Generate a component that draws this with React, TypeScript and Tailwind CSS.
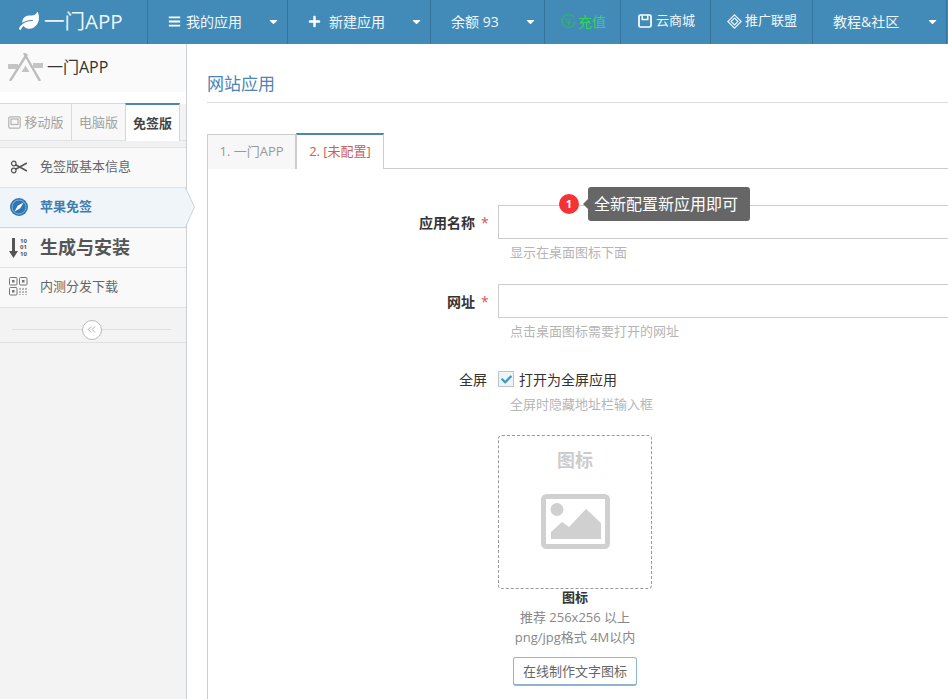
import React from "react";
import { FaLeaf, FaBars, FaPlus, FaCaretDown, FaCheck } from "react-icons/fa";
import { ChevronsLeft } from "lucide-react";

const font = "font-['Open_Sans','Noto_Sans_CJK_SC',sans-serif]";

function Nav({ w, children, caret, className = "" }: { w: string; children: React.ReactNode; caret?: boolean; className?: string }) {
  return (
    <div className={`${w} h-full shrink-0 flex items-center pb-[2px] border-r border-[#33739c] relative ${className}`}>
      {children}
      {caret && <FaCaretDown className="absolute right-[7px] top-[15px] text-[13px] text-white" />}
    </div>
  );
}

function AppStore() {
  return (
    <svg width="35" height="28" viewBox="0 0 35 28" className="shrink-0">
      <g fill="none" stroke="#bdbdbd" strokeWidth="2.4">
        <path d="M16 0 L32 28" />
        <path d="M19 1 L2 28" />
      </g>
      <rect x="0" y="11" width="10" height="5" fill="#c4c4c4" />
      <rect x="25" y="10" width="10" height="5" fill="#c4c4c4" />
      <path d="M13.5 19 L17.5 12.5 L21.5 19 Z" fill="#c4c4c4" />
    </svg>
  );
}

function SideItem({ icon, children, className = "", bold }: { icon: React.ReactNode; children: React.ReactNode; className?: string; bold?: boolean }) {
  return (
    <div className={`h-10 flex items-center border-b border-[#dfe3e6] bg-[#f9f9f9] ${bold ? "" : "pb-[2px]"} ${className}`}>
      <div className="w-[40px] pl-[9px] shrink-0 flex items-center">{icon}</div>
      <div className={bold ? "text-[18px] font-bold text-[#555]" : "text-[13px] text-[#666]"}>{children}</div>
    </div>
  );
}

function FormRow({ label, hint, marginTop }: { label: string; hint: string; marginTop: string }) {
  return (
    <div className={`flex ${marginTop}`}>
      <div className="w-[281px] shrink-0 h-[34px] flex items-center justify-end text-[14px] font-bold text-[#333]">
        {label}
        <span className="text-[#d9534f] font-normal ml-[6px] w-[8px]">*</span>
      </div>
      <div className="ml-[9px] w-[520px] shrink-0">
        <div className="h-[34px] border border-[#ccc] bg-white" />
        <div className="text-[13px] text-[#b5b5b5] pl-[12px] mt-[3px] leading-[20px]">{hint}</div>
      </div>
    </div>
  );
}

function ImagePlaceholder() {
  return (
    <svg width="69" height="55" viewBox="0 0 69 55" className="mt-[21px]">
      <rect x="2.5" y="2.5" width="64" height="50" rx="3" fill="none" stroke="#d0d0d0" strokeWidth="5" />
      <circle cx="16" cy="15.5" r="6.5" fill="#d0d0d0" />
      <path d="M10 45 V38 L21 28 L28 33 L45 15 L60 29 V45 Z" fill="#d0d0d0" />
    </svg>
  );
}

export default function App() {
  return (
    <div className={`w-[948px] h-[699px] overflow-hidden bg-white flex flex-col ${font}`}>
      <header className="h-11 shrink-0 bg-[#428bb9] flex">
        <Nav w="w-[148px]" className="pl-[19px] gap-[5px] text-[20.5px] text-[#eef5f9]">
          <FaLeaf className="text-[20px] text-white" />
          <span>一门APP</span>
        </Nav>
        <Nav w="w-[140px]" caret className="pl-[20px] gap-[5px] text-[14px] text-[#f2f7fa]">
          <FaBars className="text-[13px] text-white" />
          <span>我的应用</span>
        </Nav>
        <Nav w="w-[143px]" caret className="pl-[20px] gap-[8px] text-[14px] text-[#f2f7fa]">
          <FaPlus className="text-[13px] text-white" />
          <span>新建应用</span>
        </Nav>
        <Nav w="w-[114px]" caret className="pl-[20px] text-[14px] text-[#f2f7fa]">
          <span>余额 93</span>
        </Nav>
        <Nav w="w-[76px]" className="pl-[16px] gap-[2px] text-[14px] text-[#2fd65a]">
          <svg width="15" height="15" viewBox="0 0 15 15" fill="none" stroke="#2fb56a" strokeWidth="1.1">
            <path d="M13 3.5 A6.5 6.5 0 1 0 14 7.5" />
            <path d="M5 4.5 L7.5 7.5 L10 4.5 M7.5 7.5 V11.5 M5.5 8.5 H9.5" />
          </svg>
          <span>充值</span>
        </Nav>
        <Nav w="w-[90px]" className="pl-[17px] gap-[4px] text-[13px] text-[#f2f7fa]">
          <svg width="14" height="14" viewBox="0 0 14 14" fill="none" stroke="#fff" strokeWidth="1.7">
            <rect x="1" y="1" width="12" height="12" rx="1.5" />
            <path d="M4.2 1.5 V5.5 H9.8 V1.5" strokeWidth="1.4" />
          </svg>
          <span>云商城</span>
        </Nav>
        <Nav w="w-[102px]" className="pl-[16px] gap-[3px] text-[13px] text-[#f2f7fa]">
          <svg width="15" height="15" viewBox="0 0 15 15" fill="none" stroke="#f2f7fa" strokeWidth="1.1">
            <path d="M7.5 0.8 L14.2 7.5 L7.5 14.2 L0.8 7.5 Z" />
            <path d="M7.5 4 L11 7.5 L7.5 11 L4 7.5 Z" />
          </svg>
          <span>推广联盟</span>
        </Nav>
        <Nav w="w-[134px]" caret className="pl-[20px] text-[14px] text-[#f2f7fa]">
          <span>教程&amp;社区</span>
        </Nav>
      </header>

      <div className="flex-1 flex min-h-0">
        <aside className="w-[187px] shrink-0 bg-[#f3f3f3] border-r border-[#ccd1d6] flex flex-col relative">
          <div className="h-[48px] bg-[#fafafa] flex items-center pl-[8px] gap-[4px] pb-[3px] text-[16px] text-[#333]">
            <AppStore />
            <span>一门APP</span>
          </div>
          <div className="h-[12px] bg-white" />
          <div className="h-[37px] flex items-end border-b border-[#dfe3e6] text-[13px] pr-[6px]">
            <div className="w-[72px] h-[37px] pt-[1px] pl-[1px] flex items-center justify-center gap-[3px] border-t border-r border-[#d9d9d9] bg-[#f8f8f8] text-[#a3a3a3]">
              <svg width="13" height="13" viewBox="0 0 13 13" fill="none" stroke="#b3b3b3" strokeWidth="1.2">
                <rect x="0.8" y="0.8" width="11.4" height="11.4" rx="1.5" />
                <rect x="3" y="3" width="7" height="5.5" />
              </svg>
              <span>移动版</span>
            </div>
            <div className="w-[53px] h-[37px] pt-[1px] flex items-center justify-center border-t border-[#d9d9d9] bg-[#f8f8f8] text-[#a3a3a3]">电脑版</div>
            <div className="w-[55px] h-[38px] -mb-px pt-[1px] flex items-center justify-center border-x border-[#d5d5d5] border-t-2 border-t-[#4a86ad] bg-white text-[#444] font-bold">免签版</div>
          </div>
          <div className="h-[7px] bg-[#f1f1f1] border-b border-[#e3e3e3]" />
          <SideItem icon={
            <svg width="18" height="14" viewBox="0 0 20 16" fill="none" stroke="#555" strokeWidth="1.4" className="ml-[1px]">
              <circle cx="4" cy="4" r="2.6" />
              <circle cx="4" cy="12" r="2.6" />
              <path d="M6.2 5.5 L19 12.5 M6.2 10.5 L19 3.5" strokeWidth="1.8" />
            </svg>
          }>免签版基本信息</SideItem>
          <div className="h-10 flex items-center border-b border-[#ccd3d9] bg-[#f0f5f9] relative pb-[2px]">
            <div className="w-[40px] pl-[10px] shrink-0">
              <svg width="18" height="18" viewBox="0 0 18 18">
                <circle cx="9" cy="9" r="9" fill="#2e75b5" />
                <circle cx="9" cy="9" r="7" fill="none" stroke="#a9cbe6" strokeWidth="0.7" />
                <path d="M13.5 4.5 L10.3 10.3 L4.5 13.5 L7.7 7.7 Z" fill="#fff" />
              </svg>
            </div>
            <div className="text-[13px] font-bold text-[#3f7fb0]">苹果免签</div>
            <svg width="11" height="42" viewBox="0 0 11 42" className="absolute left-[185px] top-[-1px]">
              <path d="M0 0 L9.5 20 L0 41" fill="#f0f5f9" stroke="#ccd3d9" />
            </svg>
          </div>
          <SideItem bold icon={
            <div className="flex items-center gap-[2px]">
              <svg width="9" height="20" viewBox="0 0 9 20" fill="#555">
                <path d="M3 0 H6 V13 H9 L4.5 20 L0 13 H3 Z" />
              </svg>
              <div className="text-[6px] leading-[6.5px] font-bold text-[#555]">10<br />01<br />10</div>
            </div>
          }>生成与安装</SideItem>
          <SideItem icon={
            <svg width="19" height="19" viewBox="0 0 19 19" fill="none" stroke="#777" strokeWidth="1">
              <rect x="0.5" y="0.5" width="7.5" height="7.5" rx="1" />
              <rect x="10.5" y="0.5" width="7.5" height="7.5" rx="1" />
              <rect x="0.5" y="10.5" width="7.5" height="7.5" rx="1" />
              <rect x="3" y="3" width="2.5" height="2.5" fill="#777" stroke="none" />
              <rect x="13" y="3" width="2.5" height="2.5" fill="#777" stroke="none" />
              <rect x="3" y="13" width="2.5" height="2.5" fill="#777" stroke="none" />
              <path d="M11 11 V18 M14 11 V18 M17 11 V18" strokeDasharray="2 1" />
            </svg>
          }>内测分发下载</SideItem>
          <div className="h-[35px] border-b border-[#e0e0e0] flex items-center pl-[12px] pr-[15px] pt-[9px] bg-[#f3f3f3]">
            <div className="flex-1 h-px bg-[#e0e0e0]" />
            <div className="w-[20px] h-[20px] rounded-full border border-[#bbb] bg-white flex items-center justify-center text-[#999]">
              <ChevronsLeft size={13} strokeWidth={1.5} />
            </div>
            <div className="flex-1 h-px bg-[#e0e0e0]" />
          </div>
        </aside>

        <main className="flex-1 min-w-0 overflow-hidden pl-[20px] relative">
          <div className="h-[59px] border-b border-[#dcdcdc] flex items-end pb-[6px] text-[17px] text-[#4a86b8]">网站应用</div>
          <div className="mt-[30px] h-[36px] flex border-b border-[#ccc] text-[13px]">
            <div className="w-[89px] h-[35px] mt-px flex items-center justify-center border border-b-0 border-[#ccc] bg-[#f7f7f7] text-[#999]">1. 一门APP</div>
            <div className="w-[88px] h-[36px] flex items-center justify-center border-x border-[#ccc] border-t-2 border-t-[#4a86ad] bg-white text-[#c9605a]">2. [未配置]</div>
          </div>
          <div className="border-l border-[#ccc] pt-[36px] h-[540px]">
            <FormRow label="应用名称" hint="显示在桌面图标下面" marginTop="" />
            <FormRow label="网址" hint="点击桌面图标需要打开的网址" marginTop="mt-[22px]" />
            <div className="flex mt-[28px]">
              <div className="w-[279px] shrink-0 h-[20px] flex items-center justify-end text-[14px] text-[#333]">全屏</div>
              <div className="ml-[11px]">
                <div className="flex items-center h-[20px] text-[14px] text-[#333] gap-[5px]">
                  <div className="w-[16px] h-[16px] border border-[#b9c5cd] bg-[#eef3f6] flex items-center justify-center text-[#3a9ac4] text-[11px]">
                    <FaCheck />
                  </div>
                  打开为全屏应用
                </div>
                <div className="text-[13px] text-[#b5b5b5] pl-[12px] mt-[5px] leading-[20px]">全屏时隐藏地址栏输入框</div>
                <div className="mt-[21px] w-[154px] h-[154px] border border-dashed border-[#999] rounded-[4px] flex flex-col items-center">
                  <div className="mt-[12px] text-[18px] font-bold text-[#ccc] leading-[25px]">图标</div>
                  <ImagePlaceholder />
                </div>
                <div className="w-[154px] flex flex-col items-center text-[13px] leading-[20px] text-[#888]">
                  <div className="font-bold text-[#333] mt-[-2px]">图标</div>
                  <div>推荐 256x256 以上</div>
                  <div>png/jpg格式 4M以内</div>
                  <div className="mt-[10px] w-[124px] h-[29px] border border-[#8fb5cf] border-b-2 rounded-[3px] flex items-center justify-center text-[#666]">在线制作文字图标</div>
                </div>
              </div>
            </div>
          </div>

          <div className="absolute left-[372px] top-[143px] flex items-center">
            <div className="w-[20px] h-[20px] rounded-full bg-[#f53335] text-white text-[11px] font-bold flex items-center justify-center">1</div>
            <div className="ml-[4px] w-0 h-0 border-y-[5px] border-y-transparent border-r-[5px] border-r-[#666]" />
            <div className="h-[34px] w-[162px] bg-[#666] rounded-[3px] text-white text-[16px] flex items-center pl-[6px]">全新配置新应用即可</div>
          </div>
        </main>
      </div>
    </div>
  );
}
